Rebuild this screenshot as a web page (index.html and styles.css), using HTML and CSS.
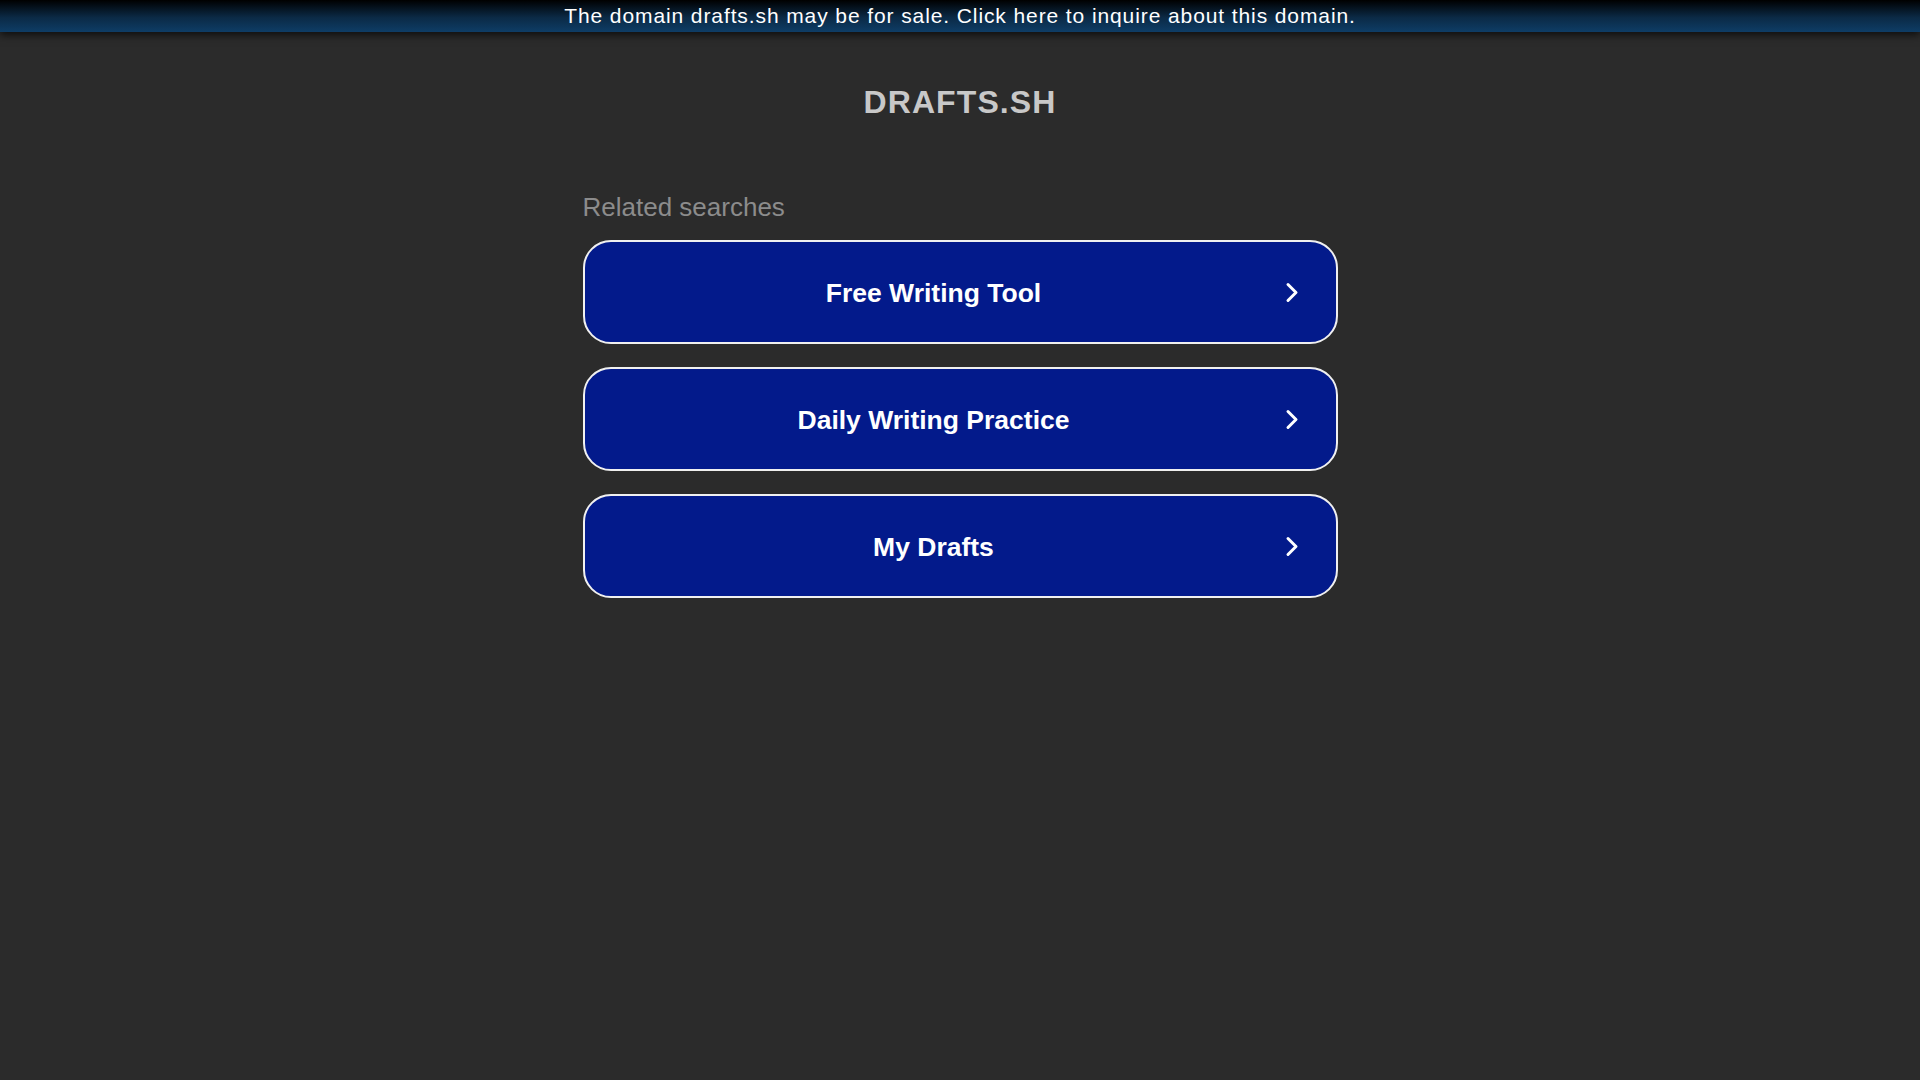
FILE: index.html
```html
<!DOCTYPE html>
<html lang="en">
<head>
    <meta charset="UTF-8">
    <title>drafts.sh</title>
    <link rel="stylesheet" href="styles.css">
</head>
<body>

<div class="topbar">
    <a href="#" class="topbar-link">The domain drafts.sh may be for sale. Click here to inquire about this domain.</a>
</div>

<div class="container">
    <h1 class="domain">DRAFTS.SH</h1>

    <div class="related">
        <p class="related-title">Related searches</p>
        <div class="related-list">
            <a href="#" class="related-item">
                <span class="related-text">Free Writing Tool</span>
                <svg class="arrow" width="14" height="21" viewBox="0 0 14 21"><polyline points="3,2.5 11,10.5 3,18.5" fill="none" stroke="#fff" stroke-width="3" stroke-linecap="round" stroke-linejoin="round"/></svg>
            </a>
            <a href="#" class="related-item">
                <span class="related-text">Daily Writing Practice</span>
                <svg class="arrow" width="14" height="21" viewBox="0 0 14 21"><polyline points="3,2.5 11,10.5 3,18.5" fill="none" stroke="#fff" stroke-width="3" stroke-linecap="round" stroke-linejoin="round"/></svg>
            </a>
            <a href="#" class="related-item">
                <span class="related-text">My Drafts</span>
                <svg class="arrow" width="14" height="21" viewBox="0 0 14 21"><polyline points="3,2.5 11,10.5 3,18.5" fill="none" stroke="#fff" stroke-width="3" stroke-linecap="round" stroke-linejoin="round"/></svg>
            </a>
        </div>
    </div>
</div>

</body>
</html>
```

FILE: styles.css
```css
body {
  margin: 0;
  background: #2b2b2b;
  font-family: "Liberation Sans", Arial, sans-serif;
}
.topbar {
  height: 32px;
  text-align: center;
  background: linear-gradient(#000000, #0b2a46 55%, #0e3d66);
  box-shadow: 0 3px 8px rgba(0,0,0,.7);
}
.topbar-link {
  color: #ffffff;
  font-size: 21px;
  line-height: 31px;
  letter-spacing: 0.9px;
  text-decoration: none;
}
.container {
  width: 755px;
  margin: 0 auto;
}
.domain {
  margin: 50px 0 0 0;
  font-size: 32px;
  line-height: 40px;
  letter-spacing: 1.1px;
  font-weight: bold;
  color: #c8c8c8;
  text-align: center;
}
.related {
  margin-top: 70px;
}
.related-title {
  margin: 0;
  font-size: 26px;
  line-height: 30px;
  color: #8c8c8c;
}
.related-list {
  margin-top: 18px;
  display: flex;
  flex-direction: column;
  gap: 23px;
}
.related-item {
  height: 100px;
  box-sizing: content-box;
  display: flex;
  align-items: center;
  padding: 0 37px 0 20px;
  background: #031a8b;
  border: 2px solid #f0f0f0;
  border-radius: 28px;
  text-decoration: none;
}
.related-text {
  flex: 1;
  margin-right: 22px;
  padding-top: 3px;
  text-align: center;
  color: #ffffff;
  font-size: 26.5px;
  font-weight: bold;
}
.arrow {
  display: block;
}
```
